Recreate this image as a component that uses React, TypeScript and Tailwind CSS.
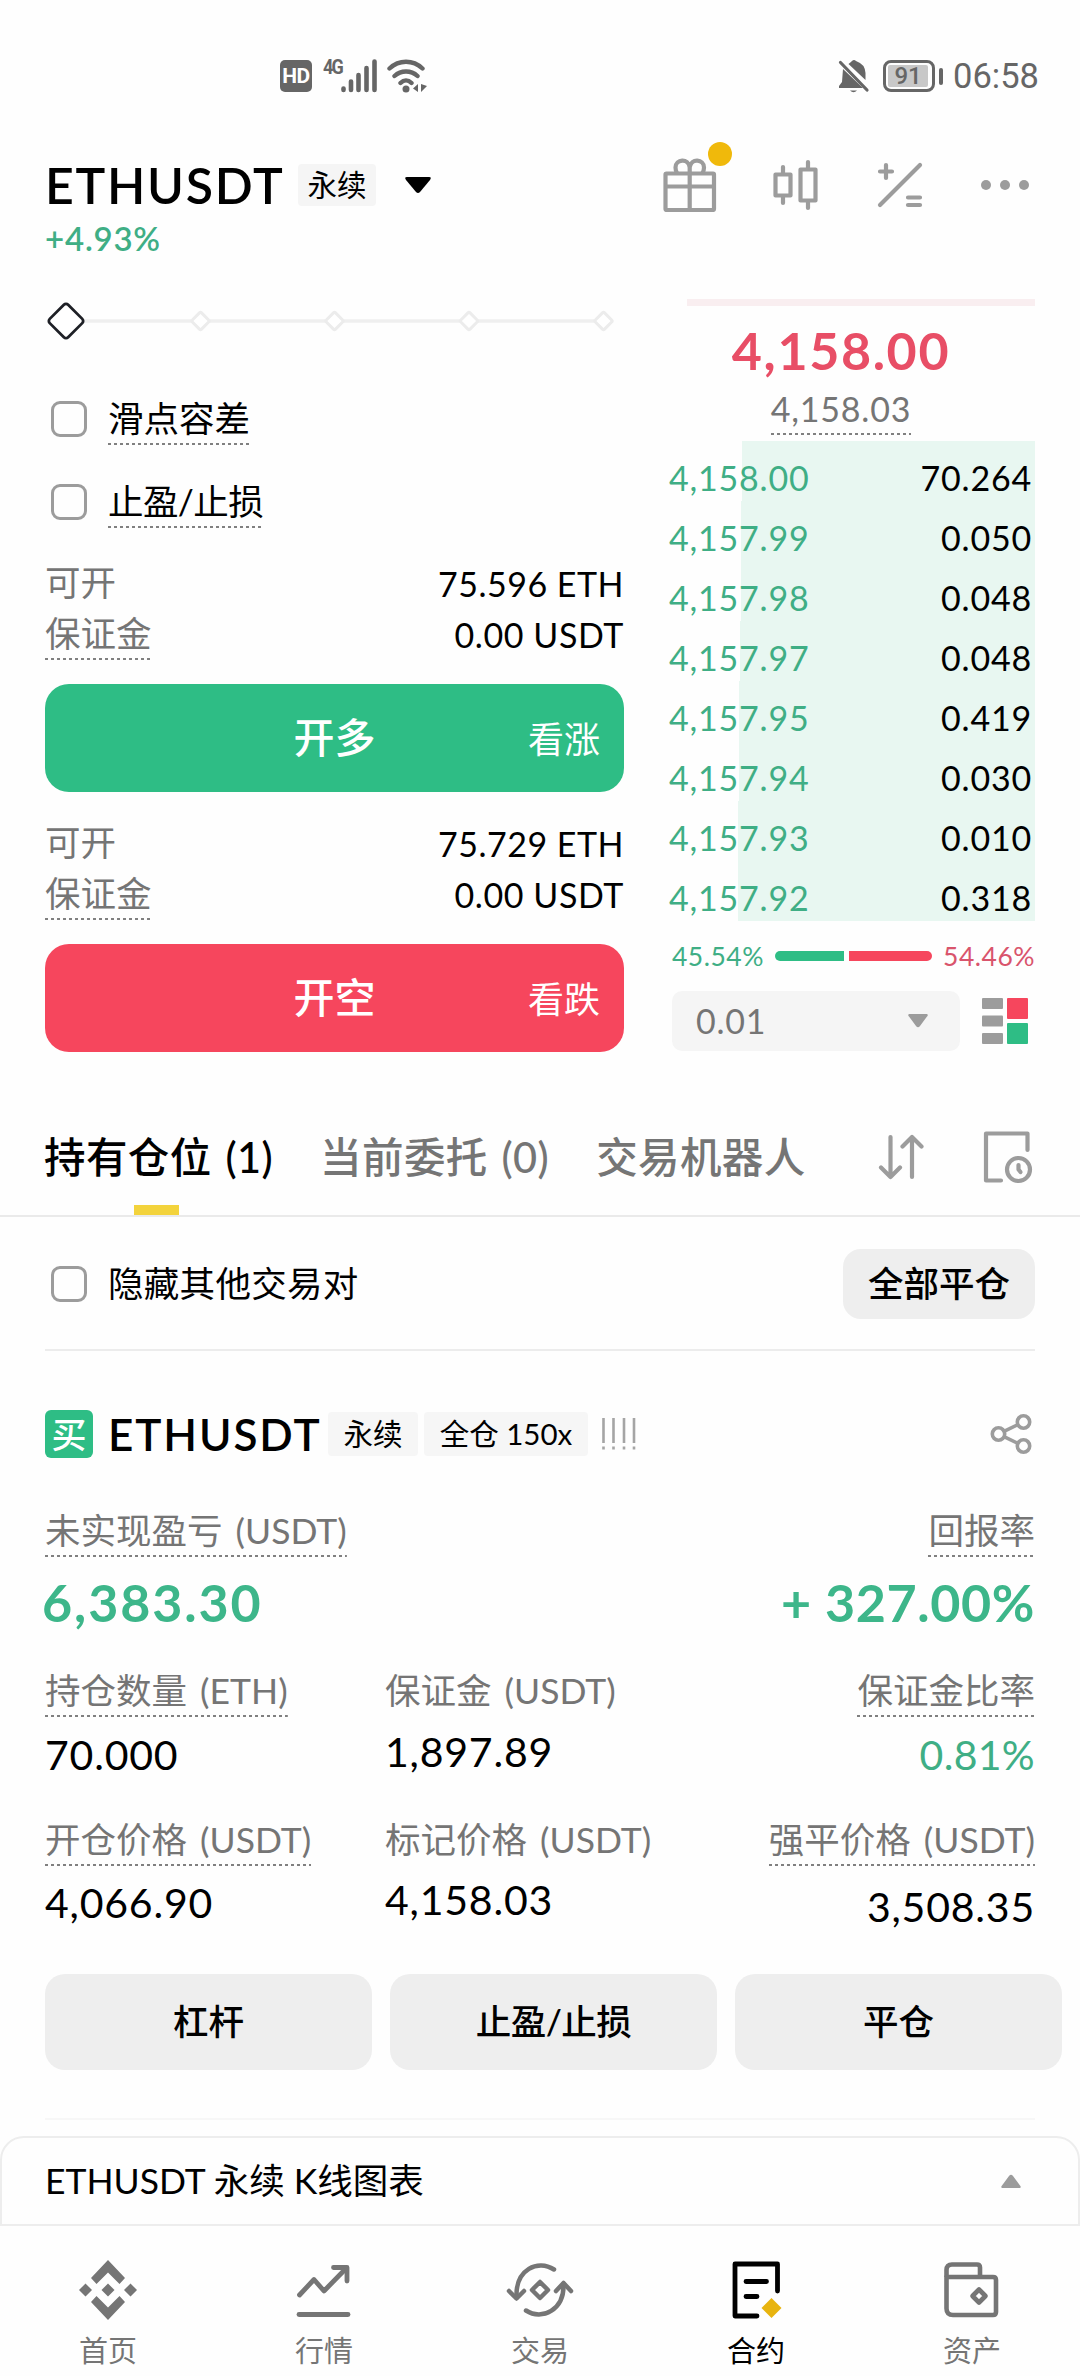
import type { ReactNode } from "react"

const bids = [
  { price: "4,158.00", amount: "70.264", depth: 293 },
  { price: "4,157.99", amount: "0.050", depth: 294 },
  { price: "4,157.98", amount: "0.048", depth: 294 },
  { price: "4,157.97", amount: "0.048", depth: 295 },
  { price: "4,157.95", amount: "0.419", depth: 296 },
  { price: "4,157.94", amount: "0.030", depth: 296 },
  { price: "4,157.93", amount: "0.010", depth: 297 },
  { price: "4,157.92", amount: "0.318", depth: 297 },
]

const orders = [
  { max: "75.596 ETH", cost: "0.00 USDT", title: "开多", hint: "看涨", bg: "bg-[#2ebd85]", gap: "mt-[11px]" },
  { max: "75.729 ETH", cost: "0.00 USDT", title: "开空", hint: "看跌", bg: "bg-[#f6465d]", gap: "mt-[26px]" },
]

const navItems = [
  { label: "首页", icon: <HomeIcon />, active: false },
  { label: "行情", icon: <MarketIcon />, active: false },
  { label: "交易", icon: <TradeIcon />, active: false },
  { label: "合约", icon: <FuturesIcon />, active: true },
  { label: "资产", icon: <WalletIcon />, active: false },
]

function HomeIcon() {
  return (
    <svg width="60" height="60" viewBox="0 0 60 60" fill="#757575">
      <path d="M30 0 47 18 41.500 24 30 12.500 18.500 24 13 18z" />
      <path d="M30 60 47 42 41.500 36 30 47.500 18.500 36 13 42z" />
      <path d="M30 23.500 36.500 30 30 36.500 23.500 30zM7.500 23.500 14 30 7.500 36.500 1 30zM52.500 23.500 59 30 52.500 36.500 46 30z" />
    </svg>
  )
}

function MarketIcon() {
  return (
    <svg width="60" height="60" viewBox="0 0 60 60" fill="none" stroke="#757575" strokeWidth="4.800" strokeLinecap="round" strokeLinejoin="round">
      <path d="M5.500 35 20 19.500 30 31 52 8.500" />
      <path d="M39.500 7.500H53V21" />
      <path d="M5 54.500H54" />
    </svg>
  )
}

function TradeIcon() {
  return (
    <svg width="68" height="60" viewBox="0 0 68 60" fill="none" stroke="#757575" strokeWidth="4.500" strokeLinecap="round" strokeLinejoin="round">
      <path d="M48 9.500C32-1 9.500 9 10.500 37" />
      <path d="M3 31 10.500 38.500 18 31" />
      <path d="M20 50.500C36 61 58.500 50 57.500 24" />
      <path d="M50 31 57.500 23 65 31" />
      <path d="M34 22 42 30 34 38 26 30z" />
    </svg>
  )
}

function FuturesIcon() {
  return (
    <svg width="60" height="60" viewBox="0 0 60 60" fill="none" stroke="#000" strokeWidth="4.800" strokeLinecap="round" strokeLinejoin="round">
      <path d="M51.500 31V4H9V56H31" />
      <path d="M20 21.500H40.500M20 36.500H31" />
      <path d="M45.500 38 55.500 48 45.500 58 35.500 48z" fill="#e8b40f" stroke="none" />
    </svg>
  )
}

function WalletIcon() {
  return (
    <svg width="60" height="60" viewBox="0 0 60 60" fill="none" stroke="#757575" strokeWidth="4.600" strokeLinejoin="round">
      <path d="M38 17V7.500Q38 4.500 35 4.500H10Q4.500 4.500 4.500 10V17" />
      <path d="M4.500 17H51Q54 17 54 20V52Q54 55 51 55H11Q4.500 55 4.500 48.500z" />
      <path d="M37 29.500 43.500 36 37 42.500 30.500 36z" />
    </svg>
  )
}

function StatusBar() {
  return (
    <div className="flex h-[100px] items-center pt-[52px] pr-[41px] pl-[280px] text-[#666] [font-family:Roboto,sans-serif]">
      <div className="flex h-8 w-8 items-center justify-center rounded-[5px] bg-[#666] text-[21px] leading-none font-bold tracking-[-0.5px] text-white">
        HD
      </div>
      <div className="ml-[11px] w-[19px] self-start pt-[6px] text-[20px] leading-[18px] font-bold tracking-[-2px]">
        <span className="inline-block origin-left scale-x-90">4G</span>
      </div>
      <svg className="-ml-px" width="36" height="34" viewBox="0 0 36 34" fill="none" stroke="#666" strokeWidth="4.600" strokeLinecap="round">
        <path d="M2.500 29.500V31M10 22.500V31M17.500 16V31M25.500 9V31M33.500 2.500V31" />
      </svg>
      <svg className="ml-[10px]" width="42" height="34" viewBox="0 0 42 34" fill="none" stroke="#666" strokeWidth="4.400" strokeLinecap="round">
        <path d="M2.500 9.500C12 .500 26 .500 35.500 9.500M7.500 17C14 11 24 11 30.500 17M13.500 24C17 20.500 21 20.500 24.500 24" />
        <circle cx="19" cy="30" r="3.500" fill="#666" stroke="none" />
        <path d="M31 25V33L26 29.500zM34 25V33L40 27z" fill="#666" stroke="none" />
      </svg>
      <svg className="ml-auto" width="32" height="34" viewBox="0 0 32 34" fill="#666">
        <path d="M5 10 25 29H1V27L4 23zM10.500 5Q13 3 14 2Q16 0 18 2Q27 5 27.500 14V21z" />
        <path d="M2.500 3.500 29 31" stroke="#666" strokeWidth="3.200" strokeLinecap="round" />
        <path d="M12 31.500H19Q15.500 35 12 31.500z" />
      </svg>
      <div className="ml-[13px] flex h-8 w-[52px] items-center rounded-[8px] border-[3px] border-[#666] p-[2px]">
        <div className="flex h-[22px] w-[40px] items-center justify-center rounded-[2px] bg-[#c8c8c8] text-[24px] leading-none font-medium">
          91
        </div>
      </div>
      <div className="ml-1 h-[17px] w-[4px] rounded-sm bg-[#666]" />
      <div className="ml-[10px] text-[34.500px] leading-none">06:58</div>
    </div>
  )
}

function Header() {
  return (
    <header className="pr-[45px] pl-[45px]">
      <div className="flex h-[60px] items-center">
        <h1 className="w-[241px] text-[50px] leading-none font-semibold tracking-[1.700px] whitespace-nowrap">ETHUSDT</h1>
        <span className="ml-[12px] flex h-[42px] w-[78px] items-center justify-center rounded bg-[#f5f5f5] text-[29.500px]">永续</span>
        <svg className="ml-[29px]" width="26" height="17" viewBox="0 0 26 17">
          <path d="M2 0H24Q27 0 25 3L15 15Q13 17 11 15L1 3Q-1 0 2 0z" />
        </svg>
        <div className="relative ml-auto h-[54px] w-[54px]">
          <svg width="54" height="54" viewBox="0 0 54 54" fill="none" stroke="#9c9c9c" strokeWidth="4.200" strokeLinejoin="round">
            <rect x="2.500" y="15.500" width="48.500" height="36.500" rx="1" />
            <path d="M2.500 28.500H51M26.700 15V52" />
            <path d="M26.700 15V9.500C25.500-.500 12.500 1 12.500 9.500Q12.500 12.500 14 15M26.700 9.500C28-.500 41 1 41 9.500Q41 12.500 39.500 15" />
          </svg>
          <span className="absolute -top-[16px] left-[45px] h-6 w-6 rounded-full bg-[#f0b90b]" />
        </div>
        <svg className="ml-[56px]" width="45" height="52" viewBox="0 0 45 52" fill="none" stroke="#9c9c9c" strokeWidth="4.200" strokeLinecap="round" strokeLinejoin="round">
          <path d="M10 8V15M10 37V44M35 3V10M35 42V49" />
          <rect x="2.500" y="15.500" width="15" height="21" />
          <rect x="27.500" y="10.500" width="15" height="31" />
        </svg>
        <svg className="ml-[59px]" width="46" height="46" viewBox="0 0 46 46" fill="none" stroke="#9c9c9c" strokeWidth="4.200" strokeLinecap="round">
          <path d="M3 43 43 3M3 9.500H15M9 3V16M31 35.500H43M31 43H43" />
        </svg>
        <svg className="mr-[6px] ml-[58px]" width="48" height="10" viewBox="0 0 48 10" fill="#9c9c9c">
          <circle cx="5" cy="5" r="5" />
          <circle cx="24" cy="5" r="5" />
          <circle cx="43" cy="5" r="5" />
        </svg>
      </div>
      <div className="h-[46px] text-[33px] leading-[46px] font-semibold tracking-[0.800px] text-[#3fae85]">+4.93%</div>
    </header>
  )
}

function LeverageSlider() {
  return (
    <svg className="my-[38px] block" width="579" height="44" viewBox="0 0 579 44" fill="#fff">
      <path d="M21 22H559" stroke="#efefef" strokeWidth="3.500" />
      {[155.5, 289.5, 424, 558.5].map((x) => (
        <rect key={x} x={x - 6.5} y="15.500" width="13" height="13" rx="1.500" stroke="#ececec" strokeWidth="3" transform={`rotate(45 ${x} 22)`} />
      ))}
      <rect x="8" y="9" width="26" height="26" rx="3" stroke="#1e2026" strokeWidth="2.800" transform="rotate(45 21 22)" />
    </svg>
  )
}

function Checkbox() {
  return <span className="ml-[6px] h-9 w-9 shrink-0 rounded-[9px] border-[3px] border-[#9c9c9c]" />
}

function Dashed({ children, color = "" }: { children: ReactNode; color?: string }) {
  return (
    <span
      className={`inline-block h-[52px] bg-[repeating-linear-gradient(90deg,#808080_0_3px,transparent_3px_6px)] bg-[length:100%_2px] bg-bottom bg-no-repeat leading-[52px] whitespace-nowrap ${color}`}
    >
      {children}
    </span>
  )
}

function OrderForm() {
  return (
    <div className="w-[579px] text-[35.500px]">
      <LeverageSlider />
      <div className="flex h-[76px] items-center gap-[21px]">
        <Checkbox />
        <Dashed>滑点容差</Dashed>
      </div>
      <div className="flex h-[90px] items-center gap-[21px] tracking-[-0.600px]">
        <Checkbox />
        <Dashed>止盈/止损</Dashed>
      </div>
      {orders.map((order) => (
        <div key={order.title} className={order.gap}>
          <div className="flex h-[50px] items-center justify-between">
            <span className="text-[#757575]">可开</span>
            <span className="text-[34px] tracking-[0.500px]">{order.max}</span>
          </div>
          <div className="flex h-[52px] items-center justify-between">
            <Dashed color="text-[#757575]">保证金</Dashed>
            <span className="text-[34px] tracking-[0.600px]">{order.cost}</span>
          </div>
          <button className={`relative mt-6 flex h-[108px] w-full items-center justify-center rounded-[24px] text-white ${order.bg}`}>
            <span className="text-[41px] font-medium">{order.title}</span>
            <span className="absolute right-[24px] mt-[2px] text-[36px]">{order.hint}</span>
          </button>
        </div>
      ))}
    </div>
  )
}

function OrderBook() {
  return (
    <div className="w-[366px] text-[34px] leading-none">
      <div className="mt-[38px] ml-[18px] h-[7px] bg-[#f9eef0]" />
      <div className="mt-[14px] flex h-[60px] items-center justify-center pr-[22px] text-[52px] font-bold tracking-[1.600px] text-[#e84e66]">
        4,158.00
      </div>
      <div className="mt-[3px] flex justify-center pr-[22px] tracking-[0.800px]">
        <Dashed color="text-[#757575]">4,158.03</Dashed>
      </div>
      <div className="mt-[6px]">
        {bids.map((bid) => (
          <div
            key={bid.price}
            className="flex h-[60px] justify-between bg-[linear-gradient(#e8f7f1,#e8f7f1)] bg-right bg-no-repeat pt-[20px] pr-[3px] tracking-[0.800px]"
            style={{ backgroundSize: `${bid.depth}px 100%` }}
          >
            <span className="text-[#3fae85]">{bid.price}</span>
            <span>{bid.amount}</span>
          </div>
        ))}
      </div>
      <div className="flex h-[70px] items-center justify-between pl-[3px] text-[26.500px]">
        <span className="tracking-[0.500px] text-[#3fae85]">45.54%</span>
        <div className="flex gap-[5px]">
          <div className="h-[10px] w-[69px] rounded-l-full bg-[#2ebd85]" />
          <div className="h-[10px] w-[83px] rounded-r-full bg-[#f6465d]" />
        </div>
        <span className="tracking-[0.500px] text-[#d9546c]">54.46%</span>
      </div>
      <div className="flex items-center">
        <div className="ml-[3px] flex h-[60px] w-[288px] items-center justify-between rounded-[10px] bg-[#f5f5f5] pr-[32px] pl-[24px] tracking-[0.800px] text-[#757575]">
          0.01
          <svg width="20" height="14" viewBox="0 0 20 14" fill="#9c9c9c">
            <path d="M1 0H19Q20.500 1 19 2.500L12 12Q10 14.500 8 12L1 2.500Q-.500 1 1 0z" />
          </svg>
        </div>
        <svg className="ml-[22px]" width="46" height="46" viewBox="0 0 46 46">
          <g fill="#9c9c9c">
            <rect width="21" height="11" rx="1" />
            <rect y="17.500" width="21" height="11" rx="1" />
            <rect y="35" width="21" height="11" rx="1" />
          </g>
          <rect x="25" width="21" height="21" rx="1" fill="#f6465d" />
          <rect x="25" y="25" width="21" height="21" rx="1" fill="#2ebd85" />
        </svg>
      </div>
    </div>
  )
}

function Tabs() {
  return (
    <div className="mt-[47px] flex h-[118px] items-center border-b-2 border-[#eaeaea] px-[44px] text-[41.500px] leading-none font-medium tracking-[0.400px] text-[#757575] [word-spacing:3px]">
      <div className="relative flex h-full items-center pt-[2px] text-black">
        持有仓位 (1)
        <span className="absolute bottom-0 left-[90px] h-[10px] w-[45px] bg-[#f3d33c]" />
      </div>
      <div className="ml-[47px] pt-[2px]">当前委托 (0)</div>
      <div className="ml-[47px] pt-[2px]">交易机器人</div>
      <svg className="ml-auto" width="46" height="46" viewBox="0 0 46 46" fill="none" stroke="#9c9c9c" strokeWidth="4.200" strokeLinecap="round" strokeLinejoin="round">
        <path d="M12.500 3V43M3 33.500 12.500 43 22 33.500M34 43V3M24.500 12.500 34 3 43.500 12.500" />
      </svg>
      <svg className="mr-[3px] ml-[59px]" width="50" height="54" viewBox="0 0 50 54" fill="none" stroke="#9c9c9c" strokeWidth="4.200" strokeLinecap="round" strokeLinejoin="round">
        <path d="M44.500 20V3.500H3V50.500H18" />
        <circle cx="35.500" cy="39.500" r="11.500" />
        <path d="M35.500 35V39.500L37.500 42" />
      </svg>
    </div>
  )
}

function Position() {
  return (
    <div className="px-[45px] text-[35.500px] leading-none">
      <div className="flex h-[134px] items-center border-b-2 border-[#ececec] pt-[2px]">
        <Checkbox />
        <span className="ml-[21px] tracking-[0.300px]">隐藏其他交易对</span>
        <button className="ml-auto h-[70px] w-[192px] rounded-[18px] bg-[#eee] font-medium">全部平仓</button>
      </div>

      <div className="mt-[57px] flex h-[52px] items-center">
        <span className="flex h-12 w-12 items-center justify-center rounded-md bg-[#2ebd85] text-[35px] font-medium text-white">买</span>
        <span className="ml-[15px] w-[215px] text-[44px] font-semibold tracking-[1.900px] whitespace-nowrap">ETHUSDT</span>
        <span className="ml-[5px] flex h-[44px] w-[90px] items-center justify-center rounded bg-[#f6f6f6] text-[29.500px]">永续</span>
        <span className="ml-[6px] flex h-[44px] w-[164px] items-center justify-center rounded bg-[#f6f6f6] text-[29.500px] whitespace-nowrap">
          全仓 150x
        </span>
        <svg className="ml-[12px]" width="38" height="32" viewBox="0 0 38 32" stroke="#a5a5a5" strokeWidth="2.600">
          <path d="M3.500 0V25M13.500 0V25M24 0V25M34 0V25M3.500 28.500V31.500M13.500 28.500V31.500M24 28.500V31.500M34 28.500V31.500" />
        </svg>
        <svg className="mr-[3px] ml-auto" width="42" height="40" viewBox="0 0 42 40" fill="none" stroke="#9c9c9c" strokeWidth="3.600">
          <circle cx="8.500" cy="20" r="6.200" />
          <circle cx="33.500" cy="8" r="6.200" />
          <circle cx="33.500" cy="32" r="6.200" />
          <path d="M14 17.300 28 10.600M14 22.700 28 29.400" />
        </svg>
      </div>

      <div className="mt-[45px] flex justify-between text-[#757575] [word-spacing:4px]">
        <Dashed>未实现盈亏 (USDT)</Dashed>
        <Dashed>回报率</Dashed>
      </div>
      <div className="mt-[15px] flex h-[60px] items-center justify-between text-[52px] font-bold text-[#3db68a]">
        <span className="-ml-[3px] tracking-[1.900px]">6,383.30</span>
        <span className="tracking-[0.600px]">+ 327.00%</span>
      </div>

      <div className="mt-[33px] grid grid-cols-[340px_1fr_auto] text-[#757575] [word-spacing:4px]">
        <div>
          <Dashed>持仓数量 (ETH)</Dashed>
        </div>
        <span className="leading-[52px]">保证金 (USDT)</span>
        <Dashed>保证金比率</Dashed>
      </div>
      <div className="mt-[13px] grid h-[50px] grid-cols-[340px_1fr_auto] text-[41px] leading-[50px] tracking-[0.800px]">
        <span>70.000</span>
        <span className="-mt-[3px]">1,897.89</span>
        <span className="tracking-[0.300px] text-[#3fae85]">0.81%</span>
      </div>

      <div className="mt-[34px] grid grid-cols-[340px_1fr_auto] text-[#757575] [word-spacing:4px]">
        <div>
          <Dashed>开仓价格 (USDT)</Dashed>
        </div>
        <span className="leading-[52px]">标记价格 (USDT)</span>
        <Dashed>强平价格 (USDT)</Dashed>
      </div>
      <div className="mt-[12px] grid h-[50px] grid-cols-[340px_1fr_auto] text-[41px] leading-[50px] tracking-[0.800px]">
        <span>4,066.90</span>
        <span className="-mt-[3px]">4,158.03</span>
        <span className="mt-[4px]">3,508.35</span>
      </div>

      <div className="mt-[46px] -mr-[27px] flex gap-[18px] font-medium">
        <button className="h-24 flex-1 rounded-[20px] bg-[#eee]">杠杆</button>
        <button className="h-24 flex-1 rounded-[20px] bg-[#eee] tracking-[-0.500px]">止盈/止损</button>
        <button className="h-24 flex-1 rounded-[20px] bg-[#eee]">平仓</button>
      </div>
      <div className="mt-[48px] h-[2px] bg-[#f7f7f7]" />
    </div>
  )
}

export default function App() {
  return (
    <div className="h-[2376px] w-[1080px] overflow-hidden bg-[#fefefe] text-black [font-family:Lato,'Noto_Sans_CJK_SC',sans-serif]">
      <StatusBar />
      <div className="mt-[55px]">
        <Header />
      </div>
      <div className="flex justify-between px-[45px]">
        <OrderForm />
        <OrderBook />
      </div>
      <Tabs />
      <Position />

      {/* Chart drawer */}
      <div className="mt-[16px] flex h-[90px] items-center justify-between rounded-t-[24px] border-2 border-[#ededed] pr-[57px] pl-[43px] text-[35.500px]">
        <span>ETHUSDT 永续 K线图表</span>
        <svg width="20" height="14" viewBox="0 0 20 14" fill="#9c9c9c">
          <path d="M1 14H19Q20.500 13 19 11.500L12 2Q10-.500 8 2L1 11.500Q-.500 13 1 14z" />
        </svg>
      </div>

      {/* Bottom navigation */}
      <nav className="grid h-[150px] grid-cols-5 pt-[34px]">
        {navItems.map((item) => (
          <div key={item.label} className={`flex flex-col items-center text-[29px] leading-none ${item.active ? "text-black" : "text-[#757575]"}`}>
            {item.icon}
            <span className="mt-[16px]">{item.label}</span>
          </div>
        ))}
      </nav>
    </div>
  )
}
